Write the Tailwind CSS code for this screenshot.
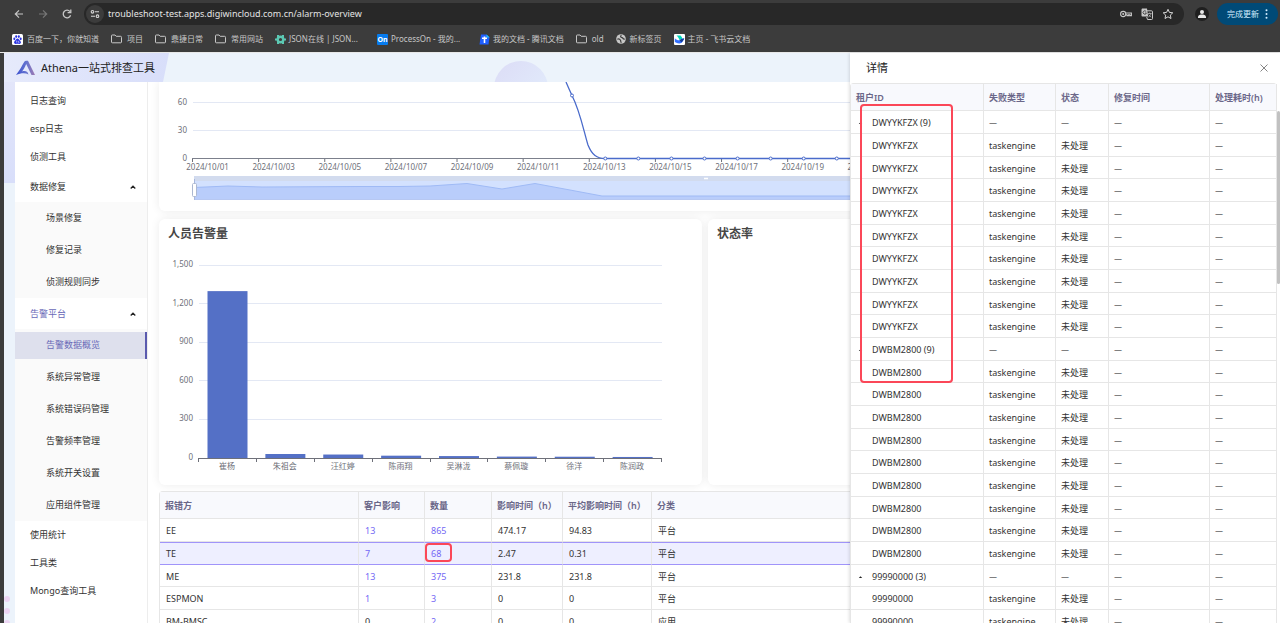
<!DOCTYPE html>
<html lang="zh-CN">
<head>
    <meta charset="UTF-8">
    <meta name="viewport" content="width=device-width, initial-scale=1.0">
    <title>Athena一站式排查工具</title>
    <script src="https://cdn.jsdelivr.net/npm/@tailwindcss/browser@4"></script>
</head>
<body class="h-screen overflow-hidden flex flex-col bg-[#3c3c3c] font-['Noto_Sans','Noto_Sans_CJK_SC',sans-serif] text-[9px] leading-3 text-[#333]">

    <!-- Browser chrome -->
    <header class="shrink-0 h-[53px] bg-[#3c3c3c] border-b border-[#e8e8e8] text-[#c7c7c7]">
        <div class="flex items-center h-7 pl-[13px] pr-[2px]">
            <button aria-label="后退" class="w-3"><svg class="size-3" viewBox="0 0 12 12" fill="none" stroke="#c7c7c7" stroke-width="1.2"><path d="M10 6H2.5M6 2.3L2.3 6L6 9.7"/></svg></button>
            <button aria-label="前进" class="w-3 ml-3"><svg class="size-3" viewBox="0 0 12 12" fill="none" stroke="#777" stroke-width="1.2"><path d="M2 6h7.5M6 2.3L9.7 6L6 9.7"/></svg></button>
            <button aria-label="重新加载" class="w-3 ml-3"><svg class="size-3" viewBox="0 0 12 12" fill="none" stroke="#c7c7c7" stroke-width="1.3"><path d="M9.6 7.3A3.8 3.8 0 1 1 9 3.6"/><path d="M9.8 1.4V4.6H6.6"/></svg></button>
            <div class="flex-1 flex items-center h-[22px] ml-[11px] pl-[2px] pr-[10px] rounded-full bg-[#282828]">
                <button aria-label="查看网站信息" class="size-[18px] rounded-full bg-[#3c3c3c] flex items-center justify-center"><svg class="size-[10px]" viewBox="0 0 10 10" fill="none" stroke="#d5d5d5" stroke-width="1.1"><circle cx="2.5" cy="2.8" r="1.3"/><path d="M5 2.8h4M1 7.2h4"/><circle cx="7.5" cy="7.2" r="1.3"/></svg></button>
                <input aria-label="地址" class="flex-1 ml-1 bg-transparent outline-none text-[9px] text-[#e3e3e3]" value="troubleshoot-test.apps.digiwincloud.com.cn/alarm-overview">
                <button aria-label="密码" class="w-3"><svg class="w-3 h-3" viewBox="0 0 12 12" fill="none" stroke="#c7c7c7" stroke-width="1.1"><circle cx="3.2" cy="6" r="2.6"/><circle cx="3.2" cy="6" r=".5"/><path d="M5.8 5h5.6v2.6H9.8V6.8H8.6v.8H7V6.8H5.8"/></svg></button>
                <button aria-label="翻译" class="w-3 ml-[9px]"><svg class="size-3" viewBox="0 0 12 12"><path d="M1 0.5h5l1.2 8H1.6A1 1 0 0 1 .5 7.500V1.500z" fill="#c7c7c7"/><path d="M5 2.800h5.500a1 1 0 0 1 1 1v6.700a1 1 0 0 1-1 1H6.500l-.8-2.500" fill="none" stroke="#c7c7c7"/><path d="M7 5.500h3.500M8.700 4.500v1M10 5.500C9.700 7.300 8.500 8.400 7.300 9M7.600 6.500l2.400 2.700" fill="none" stroke="#c7c7c7" stroke-width=".7"/><path d="M5.200 3.600A1.700 1.700 0 1 0 5.400 5H4" fill="none" stroke="#333" stroke-width=".8"/></svg></button>
                <button aria-label="收藏" class="w-3 ml-[9px]"><svg class="size-3" viewBox="0 0 12 12" fill="none" stroke="#d5d5d5"><path d="M6 1.300l1.400 3.100 3.400.4-2.500 2.300.7 3.400L6 8.800 3 10.500l.7-3.400L1.200 4.800l3.400-.4z"/></svg></button>
            </div>
            <button aria-label="个人资料" class="size-[14px] ml-[11px] rounded-full bg-[#1f1f1f] flex items-center justify-center"><svg class="size-[10px]" viewBox="0 0 10 10" fill="#e8e8e8"><circle cx="5" cy="3" r="2"/><path d="M1 9V7.700C1 6 3.500 5.500 5 5.500S9 6 9 7.700V9z"/></svg></button>
            <button class="h-[22px] ml-2 px-[10px] flex items-center gap-[6px] rounded-full bg-[#004a77] text-[8px] text-[#d3edff]">完成更新
                <svg class="w-[3px] h-[10px]" viewBox="0 0 3 10" fill="#d3edff"><circle cx="1.500" cy="1.200" r="1"/><circle cx="1.500" cy="5" r="1"/><circle cx="1.500" cy="8.800" r="1"/></svg>
            </button>
        </div>
        <nav class="flex items-center gap-3 h-[22px] pl-3 text-[8px] whitespace-nowrap">
            <a href="#" class="flex items-center gap-1"><svg class="size-[11px]" viewBox="0 0 11 11"><rect width="11" height="11" rx="1.500" fill="#fff"/><g fill="#2932e1"><ellipse cx="2.300" cy="4.800" rx="1" ry="1.400"/><ellipse cx="4.200" cy="2.600" rx="1" ry="1.400"/><ellipse cx="6.800" cy="2.600" rx="1" ry="1.400"/><ellipse cx="8.700" cy="4.800" rx="1" ry="1.400"/><path d="M5.500 4.500C7 4.500 7 6 8.300 7c1.200 1.200.6 3-.9 2.900-1.300-.2-2.500-.2-3.800 0C2.100 10 1.500 8.200 2.700 7 4 6 4 4.500 5.500 4.500z"/></g><path d="M4.700 6.600v2M6.300 6.800v1.500h1.200" stroke="#fff" stroke-width=".6" fill="none"/></svg>百度一下，你就知道</a>
            <a href="#" class="flex items-center gap-[5px]"><svg class="w-[11px] h-[10px]" viewBox="0 0 11 10" fill="none" stroke="#c7c7c7"><path d="M.5 8V1.800A.8.8 0 0 1 1.300 1H4l1.200 1.300h4.300a1 1 0 0 1 1 1V8a.8.8 0 0 1-.8.8H1.300A.8.8 0 0 1 .5 8z"/></svg>项目</a>
            <a href="#" class="flex items-center gap-[5px]"><svg class="w-[11px] h-[10px]" viewBox="0 0 11 10" fill="none" stroke="#c7c7c7"><path d="M.5 8V1.800A.8.8 0 0 1 1.300 1H4l1.200 1.300h4.300a1 1 0 0 1 1 1V8a.8.8 0 0 1-.8.8H1.300A.8.8 0 0 1 .5 8z"/></svg>鼎捷日常</a>
            <a href="#" class="flex items-center gap-[5px]"><svg class="w-[11px] h-[10px]" viewBox="0 0 11 10" fill="none" stroke="#c7c7c7"><path d="M.5 8V1.800A.8.8 0 0 1 1.300 1H4l1.200 1.300h4.300a1 1 0 0 1 1 1V8a.8.8 0 0 1-.8.8H1.300A.8.8 0 0 1 .5 8z"/></svg>常用网站</a>
            <a href="#" class="flex items-center gap-[3px] w-[90px]"><svg class="size-[11px] shrink-0" viewBox="0 0 11 11"><circle cx="5.500" cy="5.500" r="2.800" fill="none" stroke="#5cc9b4" stroke-width="2.400"/><path d="M3 1v3M8 1v3M3 7v3M8 7v3M0 5.500h2.500M8.500 5.500H11" stroke="#5cc9b4" stroke-width="2"/></svg>JSON在线 | JSON...</a>
            <a href="#" class="flex items-center gap-[3px] w-[90px]"><span class="size-[11px] shrink-0 rounded-[1px] bg-[#067bef] text-white text-[7px] leading-[11px] font-bold text-center">On</span>ProcessOn - 我的...</a>
            <a href="#" class="flex items-center gap-[3px]"><svg class="size-[11px]" viewBox="0 0 11 11"><path d="M2 .5h5.500L10.500 3 9.500 10.500H.5z" fill="#1e5eff"/><path d="M7.500.5v3h3z" fill="#22c6e8"/><path d="M3 4.200h5M5.500 2.500v6.500" stroke="#fff" stroke-width="1.600"/></svg>我的文档 - 腾讯文档</a>
            <a href="#" class="flex items-center gap-[5px]"><svg class="w-[11px] h-[10px]" viewBox="0 0 11 10" fill="none" stroke="#c7c7c7"><path d="M.5 8V1.800A.8.8 0 0 1 1.300 1H4l1.200 1.300h4.300a1 1 0 0 1 1 1V8a.8.8 0 0 1-.8.8H1.300A.8.8 0 0 1 .5 8z"/></svg>old</a>
            <a href="#" class="flex items-center gap-1"><svg class="size-[10px]" viewBox="0 0 10 10"><circle cx="5" cy="5" r="4.800" fill="#c7c7c7"/><path d="M1.300 5.200C3 4.600 4 5.400 4.500 6.300S4.300 8.200 5.500 8.600M5.500 1.300C4 2 4.500 3.500 6 3.600S6.500 5.500 8.800 5" stroke="#3c3c3c" stroke-width="1.200" fill="none"/></svg>新标签页</a>
            <a href="#" class="flex items-center gap-[3px]"><svg class="size-[11px]" viewBox="0 0 11 11"><rect width="11" height="11" rx="1" fill="#fff"/><path d="M2.500 1.500h4C7.800 2.700 8.200 4 8.300 5L5.500 6C4.800 4 4 2.800 2.500 1.500z" fill="#00d6b9"/><path d="M.8 4.200C3 6.500 5.500 7 7 5.500 8 4.500 9 4.300 10.300 4.800 9 6 8.900 9.500 5.300 9.500 3 9.500 1.300 8.500.8 7.800z" fill="#3370ff"/><path d="M5.500 6.500C7.500 5 8.500 4.200 10.300 4.800 9.500 5.500 9 7.500 7.500 8.200z" fill="#133c9a"/></svg>主页 - 飞书云文档</a>
        </nav>
    </header>

    <div class="relative flex-1 min-h-0 flex flex-col ml-1 bg-[#ecf3fb]">

        <!-- Top banner -->
        <div class="relative shrink-0 h-[29px] flex items-center overflow-hidden">
            <svg class="absolute inset-0 w-[600px] h-[29px]" viewBox="0 0 600 29">
                <defs>
                    <linearGradient id="band" x1="0" x2="1"><stop offset="0" stop-color="#e6eafb"/><stop offset="1" stop-color="#d8defa"/></linearGradient>
                    <linearGradient id="disc" x1="0" x2="1" y2="1"><stop offset="0" stop-color="#dcdcf6"/><stop offset="1" stop-color="#e3effd"/></linearGradient>
                </defs>
                <path d="M0 0H165L159 29H0z" fill="url(#band)"/>
                <circle cx="517" cy="35" r="27" fill="url(#disc)"/>
            </svg>
            <div class="relative flex items-center gap-[6px] pl-3">
                <svg class="w-[19px] h-4" viewBox="0 0 19 16">
                    <defs><linearGradient id="logo" x1="0" x2="1"><stop offset="0" stop-color="#3b50cf"/><stop offset=".55" stop-color="#6674cf"/><stop offset="1" stop-color="#a07ab0"/></linearGradient></defs>
                    <path d="M0 15C4 10 6 5.500 8.500 1.500Q9.200 .8 10 .8H12L19 15H15.500L10.200 4C9 7 7.500 9.500 6 11.500 8 10.800 10 11 11.500 12.200L12.500 14.500C9 12.500 5 13 0 15z" fill="url(#logo)"/>
                </svg>
                <h1 class="text-[11px] leading-4 text-[#222]">Athena一站式排查工具</h1>
            </div>
        </div>

        <div class="flex-1 min-h-0 flex">
            <!-- Page edge decoration -->
            <div class="w-[11px] shrink-0 flex flex-col justify-between overflow-hidden">
                <div class="h-[101px] bg-linear-to-b from-[#e3e6fa] to-[#d8defa]"></div>
                <svg class="w-[11px] h-[27px] shrink-0" viewBox="0 0 11 27" fill="#ecd5f3"><circle cx="3" cy="3" r="3"/><circle cx="3" cy="15" r="3"/><circle cx="3" cy="27" r="3"/></svg>
            </div>

            <!-- Side menu -->
            <nav class="w-[133px] shrink-0 pt-[5px] bg-white border-r border-[#ededed] overflow-hidden">
                <a href="#" class="flex items-center h-7 px-[15px]">日志查询</a>
                <a href="#" class="flex items-center h-7 px-[15px]">esp日志</a>
                <a href="#" class="flex items-center h-7 px-[15px]">侦测工具</a>
                <button class="flex items-center justify-between w-full h-[31px] pl-[15px] pr-[11px]">数据修复
                    <svg class="size-[6px]" viewBox="0 0 6 6" fill="none" stroke="#222" stroke-width="1.300"><path d="M.7 4.500L3 2.200 5.300 4.500"/></svg>
                </button>
                <div class="bg-[#fafafa]">
                    <a href="#" class="flex items-center h-8 pl-[31px]">场景修复</a>
                    <a href="#" class="flex items-center h-8 pl-[31px]">修复记录</a>
                    <a href="#" class="flex items-center h-8 pl-[31px]">侦测规则同步</a>
                </div>
                <button class="flex items-center justify-between w-full h-[31px] pl-[15px] pr-[11px] text-[#6a6ab8]">告警平台
                    <svg class="size-[6px]" viewBox="0 0 6 6" fill="none" stroke="#222" stroke-width="1.300"><path d="M.7 4.500L3 2.200 5.300 4.500"/></svg>
                </button>
                <div class="bg-[#fafafa]">
                    <div class="flex items-center h-8"><a href="#" class="flex items-center w-full h-[27px] pl-[31px] bg-[#dee0ed] border-r-2 border-[#5a5aae] text-[#6a6ab8]">告警数据概览</a></div>
                    <a href="#" class="flex items-center h-8 pl-[31px]">系统异常管理</a>
                    <a href="#" class="flex items-center h-8 pl-[31px]">系统错误码管理</a>
                    <a href="#" class="flex items-center h-8 pl-[31px]">告警频率管理</a>
                    <a href="#" class="flex items-center h-8 pl-[31px]">系统开关设置</a>
                    <a href="#" class="flex items-center h-8 pl-[31px]">应用组件管理</a>
                </div>
                <a href="#" class="flex items-center h-7 px-[15px]">使用统计</a>
                <a href="#" class="flex items-center h-7 px-[15px]">工具类</a>
                <a href="#" class="flex items-center h-7 px-[15px]">Mongo查询工具</a>
            </nav>

            <main class="flex-1 min-w-0 pl-[11px] pr-[29px] bg-white overflow-hidden">
                <!-- Daily trend -->
                <section class="h-[129px] mb-2 bg-white rounded-b-md shadow-[0_0_10px_rgba(0,0,0,0.08)] overflow-hidden">
                    <svg id="trend" class="w-[1092px] h-[129px] text-[8px]" viewBox="0 0 1092 129">
                        <path d="M34 20.500H1058M34 48.500H1058" stroke="#e3e8f4"/>
                        <path d="M33 76.500H1058" stroke="#7c808c"/>
                        <g fill="#6e7079" text-anchor="end"><text x="28" y="23">60</text><text x="28" y="51">30</text><text x="28" y="79">0</text></g>
                        <g id="trendLabels" fill="#6e7079" text-anchor="middle"></g>
                        <rect x="35" y="94" width="1024" height="24" fill="#d3e1fe"/>
                        <rect x="35" y="94" width="1024" height="5" fill="#d2dbee"/>
                        <path d="M35 118V105.500L69 104 103 105 200 104.500 240 104.500 271 104 308 101.500 343 107 376 101.500 411 108 443 114H1059V118z" fill="#b9cdfb"/>
                        <path d="M35 105.500L69 104 103 105 200 104.500 240 104.500 271 104 308 101.500 343 107 376 101.500 411 108 443 114H1059" fill="none" stroke="#9fbaf5"/>
                        <path d="M35 117.500H1059" stroke="#b5c5ec" stroke-width=".6"/>
                        <path d="M35.500 97V118" stroke="#a9b8dc"/>
                        <rect x="33.500" y="101.500" width="4" height="13" rx="1" fill="#fff" stroke="#acb8d1"/>
                        <path d="M545 96.500h4" stroke="#fff" stroke-width="1.500"/>
                        <path d="M407 0Q410 7 413 13.500C421 29 425 50 429 63C433 73 438 76.500 446 76.500H1058" fill="none" stroke="#4a6bcb" stroke-width="1.300"/>
                        <g id="trendDots" fill="#fff" stroke="#4a6bcb"><circle cx="413" cy="13.500" r="1.500"/></g>
                    </svg>
                </section>

                <div class="grid grid-cols-2 gap-[6px] mb-[6px]">
                    <!-- Alarms per person -->
                    <section class="h-[266px] bg-white rounded-md shadow-[0_0_10px_rgba(0,0,0,0.08)]">
                        <h2 class="h-7 pt-[7px] pl-[9px] text-[12px] leading-4 font-bold text-[#464646]">人员告警量</h2>
                        <svg class="w-[543px] h-[238px] text-[8px]" viewBox="0 0 543 238">
                            <path d="M40 18.500H503M40 56.500H503M40 95.500H503M40 133.500H503M40 172.500H503" stroke="#e3e8f4"/>
                            <g fill="#6e7079" text-anchor="end">
                                <text x="34" y="20">1,500</text><text x="34" y="59">1,200</text><text x="34" y="97">900</text><text x="34" y="136">600</text><text x="34" y="174">300</text><text x="34" y="213">0</text>
                            </g>
                            <g id="personBars" fill="#5470c6"></g>
                            <path d="M39 211.500H503" stroke="#6e7079"/>
                            <g id="personTicks" stroke="#6e7079"></g>
                            <g id="personLabels" fill="#6e7079" text-anchor="middle"></g>
                        </svg>
                    </section>
                    <section class="h-[266px] bg-white rounded-md shadow-[0_0_10px_rgba(0,0,0,0.08)]">
                        <h2 class="h-7 pt-[7px] pl-[9px] text-[12px] leading-4 font-bold text-[#464646]">状态率</h2>
                    </section>
                </div>

                <!-- Owner table -->
                <div class="relative">
                    <table class="w-full table-fixed border-separate border-spacing-0 border-l border-t border-[#e6e6e6] rounded-t-sm text-left">
                        <colgroup><col class="w-[199px]"><col class="w-[66px]"><col class="w-[67px]"><col class="w-[71px]"><col class="w-[89px]"><col></colgroup>
                        <thead>
                            <tr class="h-[27px] bg-[#f8f9fd] text-[#6b6789] [&>th]:font-semibold [&>th]:pl-[5px] [&>th]:pt-[2px] [&>th]:border-r [&>th]:border-b [&>th]:border-[#e6e6e6]">
                                <th>报错方</th><th>客户影响</th><th>数量</th><th>影响时间（h）</th><th>平均影响时间（h）</th><th>分类</th>
                            </tr>
                        </thead>
                        <tbody id="ownerRows"></tbody>
                    </table>
                    <div class="absolute left-[266px] top-[52px] w-[27px] h-[19px] border-2 border-[#fb4758] rounded-[4px]"></div>
                </div>
            </main>
        </div>

        <!-- Detail drawer -->
        <aside class="absolute right-0 inset-y-0 w-[430px] bg-white shadow-[-1px_0_3px_rgba(0,0,0,0.12)] overflow-hidden">
            <div class="flex items-center justify-between h-[30px] pl-4 pr-3">
                <h2 class="text-[11px] leading-4 text-[#222]">详情</h2>
                <button aria-label="关闭" class="size-2"><svg class="size-2" viewBox="0 0 8 8" fill="none" stroke="#777" stroke-width=".9"><path d="M.5 .5l7 7M7.500 .5l-7 7"/></svg></button>
            </div>
            <div class="pr-[3px]">
                <table class="w-full table-fixed border-separate border-spacing-0 border-l border-t border-[#e6e6e6] rounded-t-sm text-left">
                    <colgroup><col class="w-[133px]"><col class="w-[72px]"><col class="w-[53px]"><col class="w-[101px]"><col></colgroup>
                    <thead>
                        <tr class="h-[27px] bg-[#f8f9fd] text-[#6b6789] [&>th]:font-semibold [&>th]:pl-[5px] [&>th]:pt-[2px] [&>th]:border-r [&>th]:border-b [&>th]:border-[#e6e6e6]">
                            <th>租户ID</th><th>失败类型</th><th>状态</th><th>修复时间</th><th>处理耗时(h)</th>
                        </tr>
                    </thead>
                    <tbody id="detailRows"></tbody>
                </table>
            </div>
            <div class="absolute right-0 top-[58px] w-[3px] h-[173px] rounded-full bg-[#c1c1c1]"></div>
            <div class="absolute left-[10px] top-[51px] w-[93px] h-[279px] border-2 border-[#fb4758] rounded-[4px]"></div>
        </aside>
    </div>

    <script>
        const owners = [
            ['EE', 13, 865, '474.17', '94.83', '平台'],
            ['TE', 7, 68, '2.47', '0.31', '平台'],
            ['ME', 13, 375, '231.8', '231.8', '平台'],
            ['ESPMON', 1, 3, '0', '0', '平台'],
            ['BM-BMSC', 0, 2, '0', '0', '应用'],
        ];

        const tenants = [
            { id: 'DWYYKFZX', count: 9 },
            { id: 'DWBM2800', count: 9 },
            { id: '99990000', count: 3, loaded: 2 },
        ];

        const people = [
            ['崔杨', 1297], ['朱祖会', 31], ['汪红婷', 27], ['陈雨翔', 18],
            ['吴淋泷', 15], ['蔡佩璇', 11], ['徐洋', 10], ['陈润政', 8],
        ];

        function link(n) {
            return n ? `<a href="#" class="text-[#7468f5]">${n}</a>` : n;
        }

        function renderOwners() {
            document.getElementById('ownerRows').innerHTML = owners.map((o, i) => {
                const rowClass = i === 1
                    ? 'h-[23px] bg-[#eeefff] [&>td]:pl-[6px] [&>td]:border-r [&>td]:border-r-[#e6e6e6] [&>td]:border-y [&>td]:border-y-[#a094fa]'
                    : 'h-[23px] [&:nth-child(3n)]:h-[22px] [&>td]:pl-[6px] [&>td]:pt-[2px] [&>td]:border-r [&>td]:border-b [&>td]:border-[#e6e6e6]';
                return `<tr class="${rowClass}"><td>${o[0]}</td><td>${link(o[1])}</td><td>${link(o[2])}</td><td>${o[3]}</td><td>${o[4]}</td><td>${o[5]}</td></tr>`;
            }).join('');
        }

        function renderDetails() {
            const rowClass = 'h-[23px] [&:nth-child(3n)]:h-[22px] [&>td]:pl-[5px] [&>td]:pt-[2px] [&>td]:border-r [&>td]:border-b [&>td]:border-[#e6e6e6]';
            const arrow = '<svg class="w-[5px] h-[4px]" viewBox="0 0 5 4"><path d="M.8 3L2.500 1.300 4.200 3z" fill="#222"/></svg>';
            const dash = `<td class="font-['Noto_Sans_CJK_SC',sans-serif]">—</td>`;
            let html = '';
            tenants.forEach(t => {
                html += `<tr class="${rowClass}"><td><div class="flex items-center"><button aria-label="收起" class="w-4 pl-[2px]">${arrow}</button>${t.id} (${t.count})</div></td>${dash.repeat(4)}</tr>`;
                for (let i = 0; i < (t.loaded || t.count); i++) {
                    html += `<tr class="${rowClass}"><td><div class="pl-4">${t.id}</div></td><td>taskengine</td><td>未处理</td>${dash.repeat(2)}</tr>`;
                }
            });
            document.getElementById('detailRows').innerHTML = html;
        }

        function renderTrend() {
            const band = 1025 / 31;
            let labels = '', dots = '';
            for (let d = 1; d <= 21; d += 2) {
                const x = 33 + (d - 1) * band;
                labels += `<path d="M${x + 0.5} 77v3" stroke="#6e7079"/><text x="${x + band / 2 - 1}" y="88">2024/10/${String(d).padStart(2, '0')}</text>`;
            }
            for (let d = 13; d <= 31; d++) {
                dots += `<circle cx="${33 + (d - 0.5) * band}" cy="76.5" r="1.5"/>`;
            }
            document.getElementById('trendLabels').innerHTML = labels;
            document.getElementById('trendDots').innerHTML += dots;
        }

        function renderPeople() {
            const band = 463 / 8;
            let bars = '', labels = '', ticks = '';
            people.forEach(([name, n], i) => {
                const x = 40 + i * band;
                const h = n / 1500 * 193;
                bars += `<rect x="${x + 8.5}" y="${211 - h}" width="40" height="${h}"/>`;
                labels += `<text x="${x + band / 2 - 1}" y="222">${name}</text>`;
                ticks += `<path d="M${Math.round(x) - 0.5} 211v4"/>`;
            });
            ticks += '<path d="M502.5 211v4"/>';
            document.getElementById('personBars').innerHTML = bars;
            document.getElementById('personLabels').innerHTML = labels;
            document.getElementById('personTicks').innerHTML = ticks;
        }

        renderOwners();
        renderDetails();
        renderTrend();
        renderPeople();
    </script>
</body>
</html>
